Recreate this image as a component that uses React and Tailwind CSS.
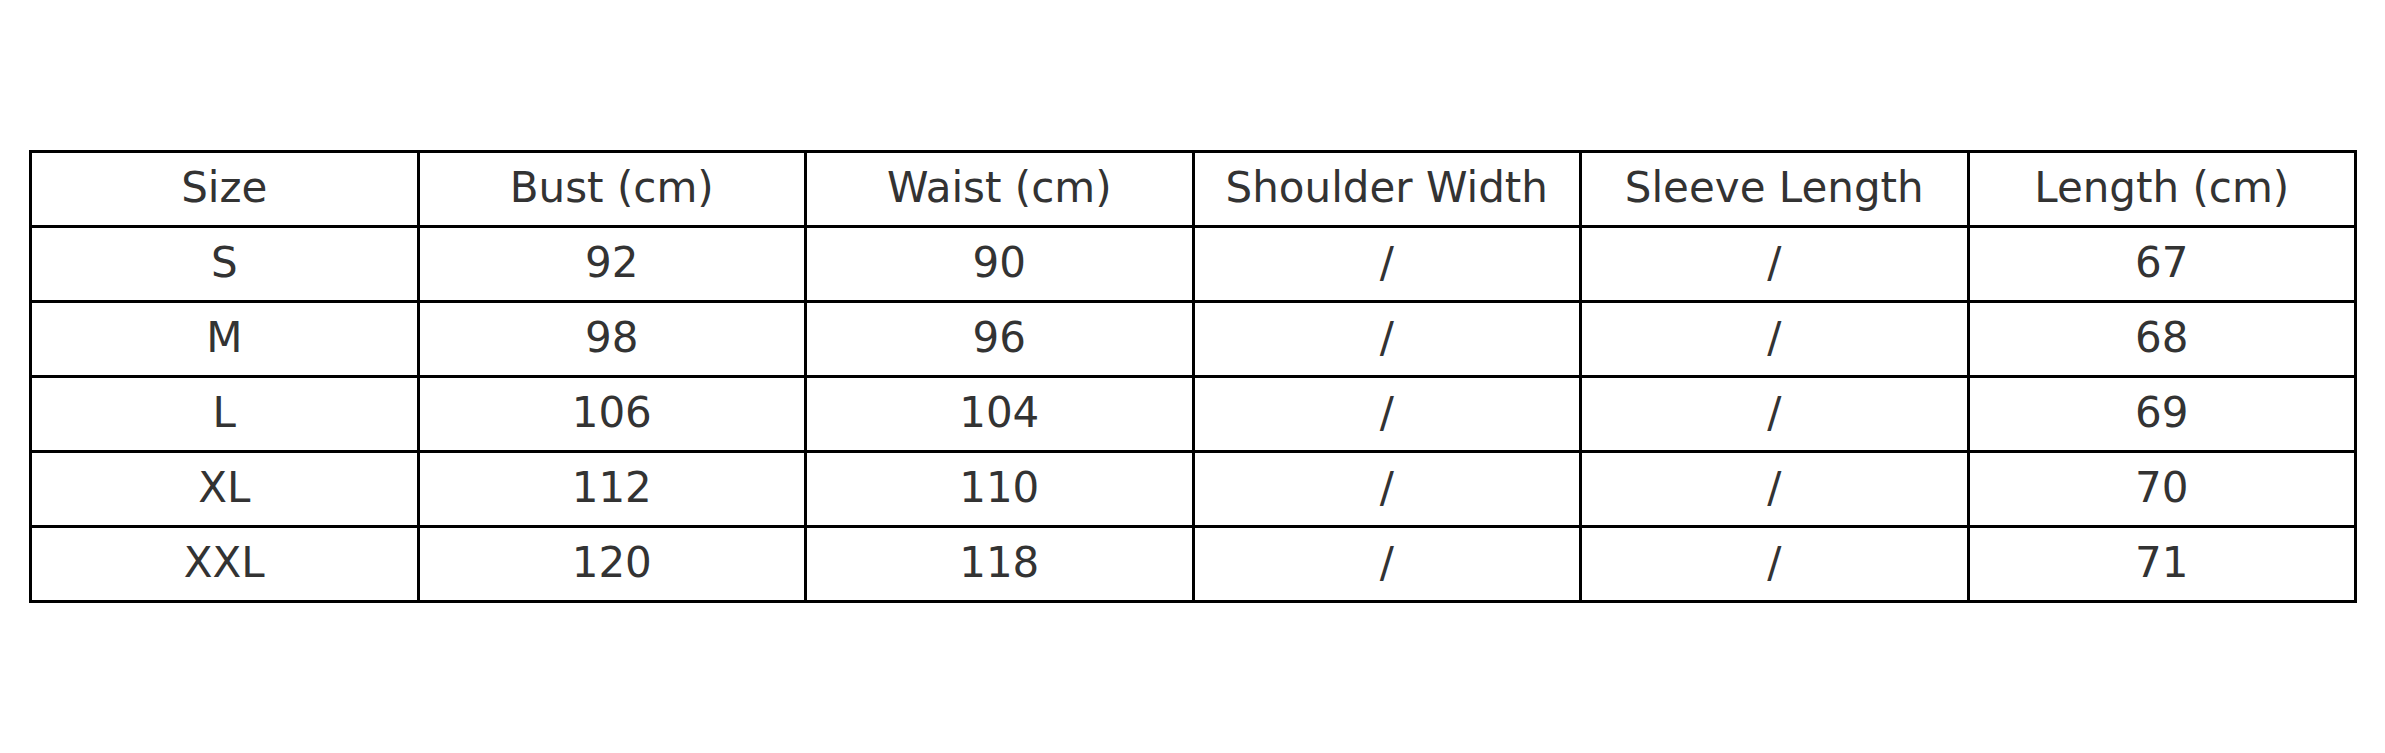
const headers = [
  "Size",
  "Bust (cm)",
  "Waist (cm)",
  "Shoulder Width",
  "Sleeve Length",
  "Length (cm)",
];

const rows = [
  ["S", "92", "90", "/", "/", "67"],
  ["M", "98", "96", "/", "/", "68"],
  ["L", "106", "104", "/", "/", "69"],
  ["XL", "112", "110", "/", "/", "70"],
  ["XXL", "120", "118", "/", "/", "71"],
];

const Cell = ({ children }) => (
  <div className="h-[75px] flex items-center justify-center border-r-[3px] border-b-[3px] border-black text-[42px] text-[#333333] leading-none pb-[2px]">
    {children}
  </div>
);

export default function App() {
  return (
    <div
      className="w-[2385px] h-[753px] bg-white pt-[150px] pl-[29px]"
      style={{ fontFamily: '"DejaVu Sans", Verdana, sans-serif' }}
    >
      <div className="inline-grid grid-cols-[repeat(6,387.5px)] border-t-[3px] border-l-[3px] border-black">
        {headers.map((h) => (
          <Cell key={h}>{h}</Cell>
        ))}
        {rows.map((r, i) =>
          r.map((v, j) => <Cell key={`${i}-${j}`}>{v}</Cell>)
        )}
      </div>
    </div>
  );
}
